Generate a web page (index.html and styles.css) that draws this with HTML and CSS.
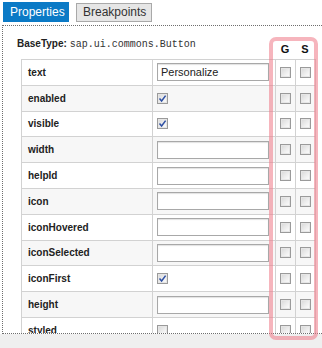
FILE: index.html
```html
<!DOCTYPE html>
<html>
<head>
<meta charset="utf-8">
<link rel="stylesheet" href="styles.css">
</head>
<body>
<div class="page">
  <div class="tabs">
    <div class="tab tab-active">Properties</div>
    <div class="tab">Breakpoints</div>
  </div>
  <div class="panel">
    <div class="head">
      <div class="basetype"><b>BaseType:</b> <span class="mono">sap.ui.commons.Button</span></div>
      <div class="gs"><span>G</span><span>S</span></div>
    </div>
    <table class="props">
      <colgroup><col class="c-label"><col class="c-value"><col class="c-g"><col class="c-s"></colgroup>
      <tr><td class="lbl">text</td><td class="val"><div class="input">Personalize</div></td><td class="cb"><span class="box"></span></td><td class="cb"><span class="box"></span></td></tr>
      <tr class="alt"><td class="lbl">enabled</td><td class="val"><span class="box checked"><svg viewBox="0 0 11 11" width="11" height="11"><path d="M2.5 5.6 L4.6 8 L8.6 2.6" fill="none" stroke="#2d4fa3" stroke-width="1.5"/></svg></span></td><td class="cb"><span class="box"></span></td><td class="cb"><span class="box"></span></td></tr>
      <tr><td class="lbl">visible</td><td class="val"><span class="box checked"><svg viewBox="0 0 11 11" width="11" height="11"><path d="M2.5 5.6 L4.6 8 L8.6 2.6" fill="none" stroke="#2d4fa3" stroke-width="1.5"/></svg></span></td><td class="cb"><span class="box"></span></td><td class="cb"><span class="box"></span></td></tr>
      <tr class="alt"><td class="lbl">width</td><td class="val"><div class="input"></div></td><td class="cb"><span class="box"></span></td><td class="cb"><span class="box"></span></td></tr>
      <tr><td class="lbl">helpId</td><td class="val"><div class="input"></div></td><td class="cb"><span class="box"></span></td><td class="cb"><span class="box"></span></td></tr>
      <tr class="alt"><td class="lbl">icon</td><td class="val"><div class="input"></div></td><td class="cb"><span class="box"></span></td><td class="cb"><span class="box"></span></td></tr>
      <tr><td class="lbl">iconHovered</td><td class="val"><div class="input"></div></td><td class="cb"><span class="box"></span></td><td class="cb"><span class="box"></span></td></tr>
      <tr class="alt"><td class="lbl">iconSelected</td><td class="val"><div class="input"></div></td><td class="cb"><span class="box"></span></td><td class="cb"><span class="box"></span></td></tr>
      <tr><td class="lbl">iconFirst</td><td class="val"><span class="box checked"><svg viewBox="0 0 11 11" width="11" height="11"><path d="M2.5 5.6 L4.6 8 L8.6 2.6" fill="none" stroke="#2d4fa3" stroke-width="1.5"/></svg></span></td><td class="cb"><span class="box"></span></td><td class="cb"><span class="box"></span></td></tr>
      <tr class="alt"><td class="lbl">height</td><td class="val"><div class="input"></div></td><td class="cb"><span class="box"></span></td><td class="cb"><span class="box"></span></td></tr>
      <tr><td class="lbl">styled</td><td class="val"><span class="box"></span></td><td class="cb"><span class="box"></span></td><td class="cb"><span class="box"></span></td></tr>
    </table>
  </div>
  <div class="footer"></div>
  <div class="highlight"></div>
</div>
</body>
</html>
```
FILE: styles.css
```css
html, body {
  margin: 0;
  padding: 0;
  overflow: hidden;
  background: #ffffff;
}
.page {
  position: relative;
  width: 322px;
  height: 348px;
  overflow: hidden;
  font-family: "Liberation Sans", Arial, sans-serif;
  color: #222;
}
.tabs {
  display: flex;
  align-items: flex-start;
  gap: 7px;
  height: 25px;
  padding-left: 3px;
  box-sizing: border-box;
  padding-top: 2px;
}
.tab {
  box-sizing: border-box;
  height: 19px;
  margin-top: 1px;
  padding: 0 6px;
  line-height: 17px;
  font-size: 12px;
  color: #333;
  background: #e6e6e6;
  border: 1px solid #a9a9a9;
  width: 76px;
}
.tab-active {
  margin-top: 0;
  height: 20px;
  width: 66px;
  line-height: 20px;
  border: none;
  padding: 0 7px;
  background: #0b7ac6;
  color: #fff;
}
.panel {
  margin-left: 2px;
  width: 330px;
  height: 309px;
  box-sizing: border-box;
  border: 1px dotted #6e6e6e;
  border-right: none;
  overflow: hidden;
  background: #fff;
}
.head {
  display: flex;
  align-items: flex-start;
  width: 312px;
  height: 33px;
  box-sizing: border-box;
  padding-left: 14px;
  padding-top: 12px;
}
.basetype {
  flex: 1;
  font-size: 10px;
  line-height: 12px;
}
.basetype b {
  color: #222;
}
.mono {
  font-family: "Liberation Mono", "Courier New", monospace;
  font-size: 10px;
  color: #333;
}
.gs {
  display: flex;
  padding-top: 5px;
  font-size: 11px;
  font-weight: bold;
  line-height: 12px;
  color: #111;
}
.gs span {
  width: 20px;
  text-align: center;
}
.props {
  margin-left: 18px;
  border-collapse: collapse;
  table-layout: fixed;
  width: 294px;
}
.c-label { width: 131px; }
.c-value { width: 123px; }
.c-g { width: 20px; }
.c-s { width: 20px; }
.props td {
  border: 1px solid #d2d2d2;
  height: 25.8px;
  padding: 0;
  box-sizing: border-box;
  vertical-align: middle;
}
.props tr.alt td {
  background: #f7f7f7;
}
.lbl {
  font-size: 10px;
  font-weight: bold;
  padding-left: 6px !important;
  color: #222;
}
.val {
  padding-left: 4px !important;
  line-height: 0;
}
.cb {
  text-align: center;
  line-height: 0;
}
.input {
  box-sizing: border-box;
  width: 112px;
  height: 18px;
  border: 1px solid #a8a8a8;
  box-shadow: inset 0 1px 1px #e2e2e2;
  background: #fff;
  font-size: 11px;
  line-height: 16px;
  padding-left: 3px;
  color: #222;
}
.box {
  display: inline-block;
  box-sizing: border-box;
  width: 11px;
  height: 11px;
  border: 1px solid #9a9a9a;
  background: linear-gradient(135deg, #d6d6d6 0%, #f0f0f0 60%, #fdfdfd 100%);
  box-shadow: inset 0 0 0 1px #e6e6e6;
  vertical-align: middle;
  position: relative;
}
.box svg {
  position: absolute;
  left: -1px;
  top: -1px;
}
.footer {
  height: 14px;
  background: #efefef;
}
.highlight {
  position: absolute;
  left: 269px;
  top: 37px;
  width: 49px;
  height: 303px;
  box-sizing: border-box;
  border: 4px solid rgba(238, 120, 134, 0.55);
  border-radius: 7px;
}
```
